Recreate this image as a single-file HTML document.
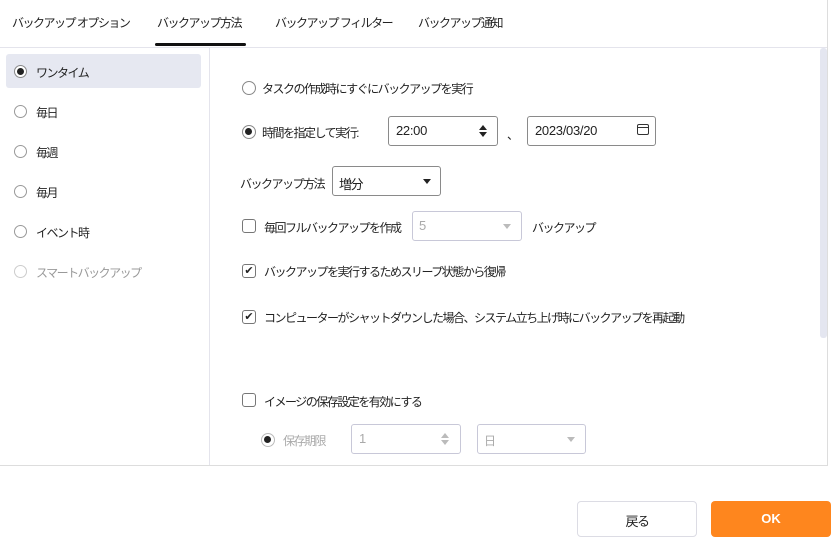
<!DOCTYPE html>
<html><head><meta charset="utf-8"><style>
*{margin:0;padding:0;box-sizing:border-box}
body{width:838px;height:557px;background:#fff;font-family:"Liberation Sans","Noto Sans CJK JP",sans-serif;font-size:12px;color:#222;position:relative;overflow:hidden;letter-spacing:-1.5px}
.a{position:absolute;white-space:nowrap}
.n{letter-spacing:-0.3px;font-size:13px}
.rad{position:absolute;width:13px;height:13px;border:1px solid #888;border-radius:50%;background:#fff}
.rad.on::after{content:"";position:absolute;left:2px;top:2px;width:7px;height:7px;border-radius:50%;background:#222}
.cb{position:absolute;width:14px;height:14px;border:1px solid #777;border-radius:3px;background:#fff;letter-spacing:0}
.box{position:absolute;border:1px solid #8a8a8a;border-radius:3px;background:#fff}
.dis{border-color:#c8c8d8;color:#aaa}
.tri{position:absolute;width:0;height:0;border-left:4px solid transparent;border-right:4px solid transparent;border-top:5px solid #222}
.sp{position:absolute;width:0;height:0;border-left:4px solid transparent;border-right:4px solid transparent}
</style></head><body>
<div class="a" style="left:12px;top:14px">バックアップ オプション</div>
<div class="a" style="left:157px;top:14px">バックアップ方法</div>
<div class="a" style="left:155px;top:43px;width:91px;height:3px;background:#111;border-radius:2px"></div>
<div class="a" style="left:275px;top:14px">バックアップ フィルター</div>
<div class="a" style="left:418px;top:14px">バックアップ通知</div>
<div class="a" style="left:0;top:47px;width:828px;height:1px;background:#e4e4ec"></div>
<div class="a" style="left:827px;top:0;width:1px;height:466px;background:#ddd"></div>
<div class="a" style="left:0;top:465px;width:828px;height:1px;background:#ddd"></div>
<div class="a" style="left:209px;top:48px;width:1px;height:417px;background:#e4e4ec"></div>
<div class="a" style="left:820px;top:48px;width:7px;height:290px;background:#e4e6f0;border-radius:3px"></div>

<div class="a" style="left:6px;top:54px;width:195px;height:34px;background:#e6e8f1;border-radius:3px"></div>
<div class="rad on" style="left:14px;top:65px"></div><div class="a" style="left:36px;top:64px">ワンタイム</div>
<div class="rad" style="left:14px;top:105px;border-color:#999"></div><div class="a" style="left:36px;top:104px">毎日</div>
<div class="rad" style="left:14px;top:145px;border-color:#999"></div><div class="a" style="left:36px;top:144px">毎週</div>
<div class="rad" style="left:14px;top:185px;border-color:#999"></div><div class="a" style="left:36px;top:184px">毎月</div>
<div class="rad" style="left:14px;top:225px;border-color:#999"></div><div class="a" style="left:36px;top:224px">イベント時</div>
<div class="rad" style="left:14px;top:265px;border-color:#ccc"></div><div class="a" style="left:36px;top:264px;color:#999">スマートバックアップ</div>

<div class="rad" style="left:242px;top:81px;width:14px;height:14px"></div><div class="a" style="left:262px;top:80px">タスクの作成時にすぐにバックアップを実行</div>
<div class="rad on" style="left:242px;top:125px;width:14px;height:14px"></div><div class="a" style="left:262px;top:124px">時間を指定して実行:</div>
<div class="box" style="left:388px;top:116px;width:110px;height:30px"></div><div class="a n" style="left:396px;top:123px">22:00</div>
<div class="sp" style="left:479px;top:125px;border-bottom:5px solid #222"></div>
<div class="sp" style="left:479px;top:132px;border-top:5px solid #222"></div>
<div class="a" style="left:507px;top:126px">、</div>
<div class="box" style="left:527px;top:116px;width:129px;height:30px"></div><div class="a n" style="left:535px;top:123px">2023/03/20</div>
<div class="a" style="left:637px;top:124px;width:12px;height:11px;border:1.5px solid #333;border-radius:2px"></div>
<div class="a" style="left:637px;top:127px;width:12px;height:1px;background:#333"></div>

<div class="a" style="left:240px;top:175px">バックアップ方法</div>
<div class="box" style="left:332px;top:166px;width:109px;height:30px"></div><div class="a" style="left:339px;top:174px;font-size:13px">増分</div>
<div class="tri" style="left:423px;top:179px"></div>

<div class="cb" style="left:242px;top:219px"></div><div class="a" style="left:264px;top:219px">毎回フルバックアップを作成</div>
<div class="box dis" style="left:412px;top:211px;width:110px;height:30px"></div><div class="a n" style="left:419px;top:218px;color:#aaa">5</div>
<div class="tri" style="left:503px;top:224px;border-top-color:#bbb"></div>
<div class="a" style="left:532px;top:219px">バックアップ</div>

<div class="cb" style="left:242px;top:264px;font-size:11px;line-height:12px;text-align:center">✔</div><div class="a" style="left:264px;top:263px">バックアップを実行するためスリープ状態から復帰</div>
<div class="cb" style="left:242px;top:310px;font-size:11px;line-height:12px;text-align:center">✔</div><div class="a" style="left:264px;top:309px">コンピューターがシャットダウンした場合、システム立ち上げ時にバックアップを再起動</div>

<div class="cb" style="left:242px;top:393px"></div><div class="a" style="left:264px;top:393px">イメージの保存設定を有効にする</div>
<div class="rad on" style="left:261px;top:433px;width:14px;height:14px;border-color:#bbb"></div>
<div class="a" style="left:283px;top:432px;color:#aaa">保存期限</div>
<div class="box dis" style="left:351px;top:424px;width:110px;height:30px"></div><div class="a n" style="left:359px;top:431px;color:#aaa">1</div>
<div class="sp" style="left:441px;top:433px;border-bottom:5px solid #bbb"></div>
<div class="sp" style="left:441px;top:440px;border-top:5px solid #bbb"></div>
<div class="box dis" style="left:477px;top:424px;width:109px;height:30px"></div><div class="a" style="left:484px;top:432px;color:#aaa">日</div>
<div class="tri" style="left:567px;top:437px;border-top-color:#bbb"></div>

<div class="box" style="left:577px;top:501px;width:120px;height:36px;border-color:#dcdce4;border-radius:4px"></div>
<div class="a" style="left:577px;top:511px;width:120px;text-align:center;font-size:13px">戻る</div>
<div class="a" style="left:711px;top:501px;width:120px;height:36px;background:#fe861e;border-radius:4px;color:#fff;font-size:13px;font-weight:bold;text-align:center;line-height:36px;letter-spacing:0">OK</div>
</body></html>
